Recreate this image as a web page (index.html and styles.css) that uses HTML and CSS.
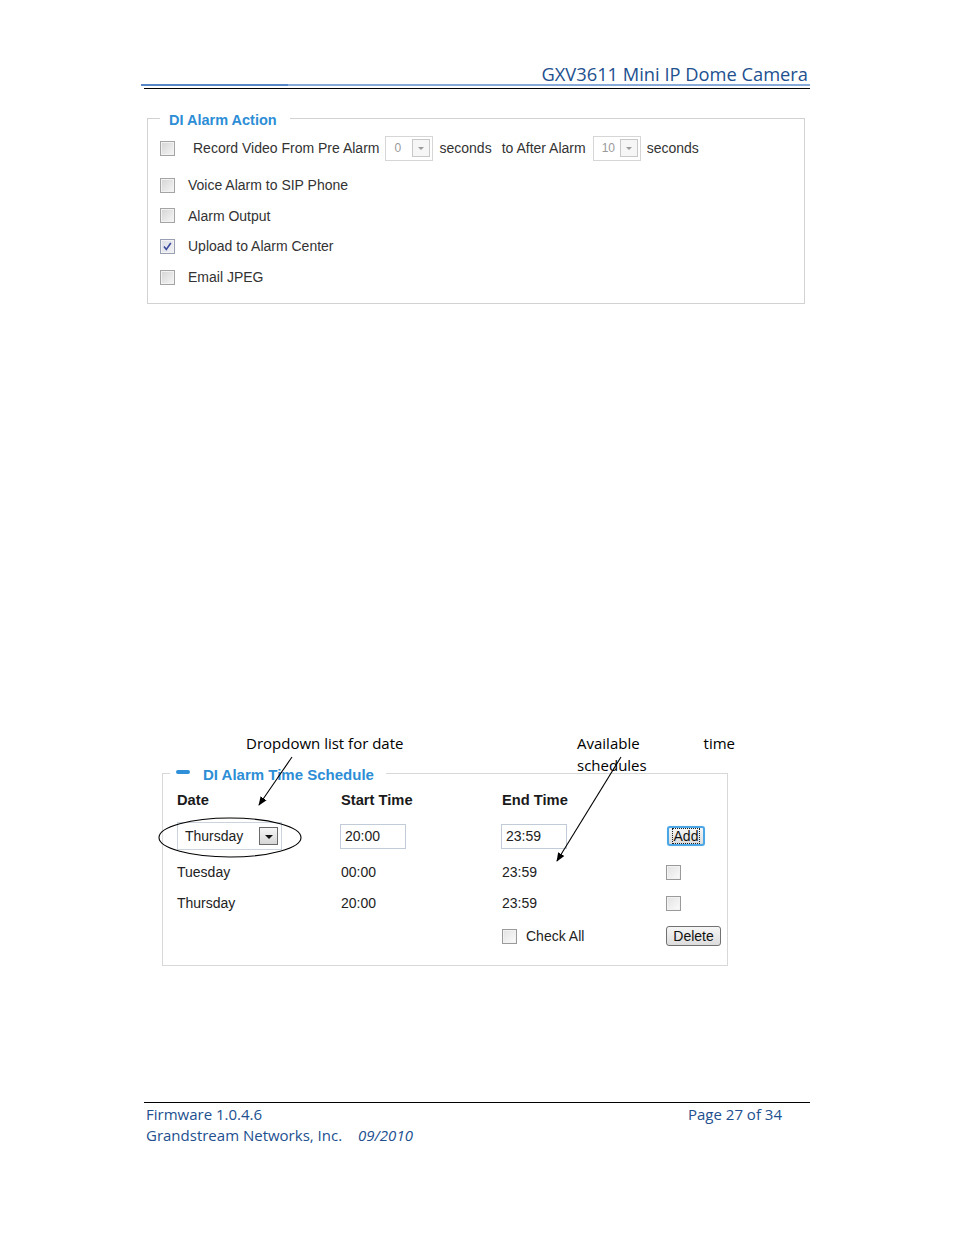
FILE: index.html
```html
<!DOCTYPE html>
<html lang="en">
<head>
<meta charset="utf-8">
<title>GXV3611 Mini IP Dome Camera - Page 27</title>
<link rel="stylesheet" href="styles.css">
</head>
<body>
<div class="page">
  <header class="doc-header">
    <div class="doc-title">GXV3611 Mini IP Dome Camera</div>
    <div class="rule-blue"></div>
    <div class="rule-black"></div>
  </header>

  <fieldset class="panel panel-action">
    <legend class="panel-legend">DI Alarm Action</legend>
    <div class="opt-row opt-row-first">
      <span class="cb"></span>
      <span class="opt-label indent-first">Record Video From Pre Alarm</span>
      <span class="mini-select sel-pre"><span class="mini-val">0</span><span class="mini-arrow"></span></span>
      <span class="opt-label gap-s">seconds</span>
      <span class="opt-label gap-m">to After Alarm</span>
      <span class="mini-select sel-post"><span class="mini-val">10</span><span class="mini-arrow"></span></span>
      <span class="opt-label gap-s">seconds</span>
    </div>
    <div class="opt-row">
      <span class="cb"></span>
      <span class="opt-label">Voice Alarm to SIP Phone</span>
    </div>
    <div class="opt-row">
      <span class="cb"></span>
      <span class="opt-label">Alarm Output</span>
    </div>
    <div class="opt-row">
      <span class="cb cb-checked"><svg viewBox="0 0 15 15" width="15" height="15"><path d="M4 7.5 L6.3 10.5 L10.8 4" fill="none" stroke="#3b4a9c" stroke-width="1.6"/></svg></span>
      <span class="opt-label">Upload to Alarm Center</span>
    </div>
    <div class="opt-row">
      <span class="cb"></span>
      <span class="opt-label">Email JPEG</span>
    </div>
  </fieldset>

  <section class="schedule-area">
    <div class="annotations">
      <div class="note note-left">Dropdown list for date</div>
      <div class="note note-right">Available time schedules</div>
    </div>

    <fieldset class="panel panel-schedule">
      <legend class="panel-legend legend-schedule"><span class="minus-icon"></span>DI Alarm Time Schedule</legend>
      <div class="sched-grid">
        <div class="col-head">Date</div>
        <div class="col-head">Start Time</div>
        <div class="col-head">End Time</div>
        <div></div>

        <div><span class="date-select"><span class="date-val">Thursday</span><span class="date-arrow"></span></span></div>
        <div><span class="time-input">20:00</span></div>
        <div><span class="time-input end-input">23:59</span></div>
        <div><span class="btn btn-add"><span class="focus-ring">Add</span></span></div>

        <div>Tuesday</div>
        <div>00:00</div>
        <div>23:59</div>
        <div><span class="cb cb-light"></span></div>

        <div>Thursday</div>
        <div>20:00</div>
        <div>23:59</div>
        <div><span class="cb cb-light"></span></div>

        <div></div>
        <div></div>
        <div class="check-all"><span class="cb cb-light"></span><span class="check-all-label">Check All</span></div>
        <div><span class="btn btn-delete">Delete</span></div>
      </div>
    </fieldset>

    <svg class="callouts" width="954" height="250" viewBox="0 0 954 250">
      <defs>
        <marker id="head" viewBox="0 0 10 10" refX="9" refY="5" markerWidth="9" markerHeight="9" orient="auto" markerUnits="userSpaceOnUse">
          <path d="M0 1 L10 5 L0 9 Z" fill="#000"/>
        </marker>
      </defs>
      <line x1="292" y1="25" x2="259" y2="73" stroke="#000" stroke-width="1.1" marker-end="url(#head)"/>
      <line x1="621" y1="25" x2="557" y2="129" stroke="#000" stroke-width="1.1" marker-end="url(#head)"/>
      <ellipse cx="230" cy="105.5" rx="71" ry="19.5" fill="none" stroke="#000" stroke-width="1.1"/>
    </svg>
  </section>

  <footer class="doc-footer">
    <div>Firmware 1.0.4.6</div>
    <div>Page 27 of 34</div>
    <div>Grandstream Networks, Inc.<span class="foot-date">09/2010</span></div>
    <div></div>
  </footer>
</div>
</body>
</html>
```

FILE: styles.css
```css
body {
  margin: 0;
  background: #ffffff;
}

.page {
  width: 954px;
  height: 1235px;
  display: flex;
  flex-direction: column;
  font-family: "Liberation Sans", Arial, sans-serif;
  background: #ffffff;
}

/* ---------- document header ---------- */
.doc-header {
  margin: 64px 0 0 141px;
  width: 669px;
}

.doc-title {
  font-family: "Open Sans", "Noto Sans", sans-serif;
  font-size: 18.3px;
  line-height: 20px;
  height: 20px;
  color: #22508f;
  text-align: right;
  padding-right: 2px;
}

.rule-blue {
  height: 2px;
  background: linear-gradient(to right, #5886c4 0, #5886c4 22%, #87aad9 22%, #87aad9 100%);
}

.rule-black {
  height: 1px;
  background: #000000;
  margin: 2px 0 0 3px;
}

/* ---------- panels ---------- */
.panel {
  margin: 0;
  min-width: 0;
  box-sizing: border-box;
  border: 1px solid #d2d2d2;
}

.panel-legend {
  font-weight: bold;
  font-size: 14.5px;
  line-height: 16px;
  color: #2d8ed6;
  padding: 4px 13px 0 9px;
}

.panel-action {
  margin: 19px 0 0 147px;
  width: 658px;
  padding: 5px 12px 11px 12px;
}

.opt-row {
  display: flex;
  align-items: center;
  height: 30.6px;
}

.opt-row-first {
  height: 30px;
  margin-bottom: 7px;
}

.cb {
  flex: none;
  display: inline-block;
  width: 15px;
  height: 15px;
  box-sizing: border-box;
  border: 1px solid #a4a4a4;
  background: linear-gradient(135deg, #d4d4d4 0%, #ececec 70%, #f6f6f6 100%);
  box-shadow: inset 0 0 0 1px #f2f2f2;
  vertical-align: middle;
}

.cb svg {
  display: block;
  margin: -1px;
}

.cb-checked {
  border-color: #9aa0b4;
  background: linear-gradient(135deg, #dcdde6 0%, #f1f1f5 100%);
}

.opt-label {
  font-size: 14px;
  color: #333333;
  margin-left: 13px;
  white-space: nowrap;
}

.indent-first {
  margin-left: 18px;
}

.gap-s {
  margin-left: 6px;
}

.gap-m {
  margin-left: 10px;
}

.mini-select {
  display: flex;
  align-items: center;
  width: 48px;
  height: 25px;
  box-sizing: border-box;
  border: 1px solid #d6d6d6;
  padding-left: 8px;
  margin-left: 6px;
}

.sel-post {
  margin-left: 7px;
}

.mini-val {
  font-size: 12px;
  color: #9a9a9a;
}

.mini-arrow {
  margin-left: auto;
  margin-right: 2px;
  width: 18px;
  height: 18px;
  box-sizing: border-box;
  border: 1px solid #c8c8c8;
  background: #f6f6f6;
  display: flex;
  align-items: center;
  justify-content: center;
}

.mini-arrow::after {
  content: "";
  border-left: 3px solid transparent;
  border-right: 3px solid transparent;
  border-top: 3px solid #9a9a9a;
}

/* ---------- schedule area ---------- */
.schedule-area {
  position: relative;
  margin-top: 428px;
}

.annotations {
  display: flex;
  font-family: "Open Sans", "Noto Sans", sans-serif;
  font-size: 15px;
  line-height: 22px;
  color: #000000;
}

.note-left {
  margin-left: 246px;
  width: 331px;
  white-space: nowrap;
}

.note-right {
  width: 158px;
  text-align: justify;
  text-align-last: left;
}

.panel-schedule {
  margin: -13px 0 0 162px;
  width: 566px;
  padding: 5px 0 15px 14px;
  border-color: #d8d8d8;
}

.legend-schedule {
  font-size: 15px;
  margin-left: -7px;
  padding: 4px 12px 0 6px;
  display: flex;
  align-items: center;
}

.minus-icon {
  display: inline-block;
  width: 14px;
  height: 4px;
  border-radius: 2px;
  background: #2f8fd8;
  margin-right: 13px;
  position: relative;
  top: -3px;
}

.sched-grid {
  display: grid;
  grid-template-columns: 164px 161px 164px 1fr;
  grid-template-rows: 24px 48px 24px 38px 28px;
  align-items: center;
  font-size: 14px;
  color: #222222;
}

.sched-grid > div {
  display: flex;
  align-items: center;
}

.col-head {
  font-weight: bold;
  font-size: 14.7px;
  color: #1a1a1a;
}

.date-select {
  display: flex;
  align-items: center;
  width: 105px;
  height: 28px;
  box-sizing: border-box;
  border: 1px solid #cbd3dd;
  padding-left: 7px;
}

.date-val {
  font-size: 14px;
  color: #222222;
}

.date-arrow {
  margin-left: auto;
  margin-right: 3px;
  width: 19px;
  height: 18px;
  box-sizing: border-box;
  border: 1px solid #6a6a6a;
  background: linear-gradient(#f6f6f6, #d6d6d6);
  display: flex;
  align-items: center;
  justify-content: center;
}

.date-arrow::after {
  content: "";
  border-left: 4px solid transparent;
  border-right: 4px solid transparent;
  border-top: 4px solid #111111;
  margin-top: 1px;
}

.time-input {
  display: flex;
  align-items: center;
  width: 66px;
  height: 25px;
  box-sizing: border-box;
  border: 1px solid #c2ccd9;
  padding-left: 4px;
  margin-left: -1px;
  color: #222222;
}

.end-input {
  margin-left: -1px;
}

.btn {
  display: flex;
  align-items: center;
  justify-content: center;
  height: 20px;
  box-sizing: border-box;
  border-radius: 3px;
  background: linear-gradient(#f6f6f6, #dcdcdc);
  font-size: 14px;
  color: #111111;
}

.btn-add {
  width: 38px;
  margin-left: 1px;
  border: 2px solid #4aa6e4;
  box-shadow: 0 0 1px #9fd0f2;
}

.focus-ring {
  outline: 1px dotted #222222;
  padding: 0 1px;
  line-height: 14px;
}

.btn-delete {
  width: 55px;
  border: 1px solid #717171;
}

.cb-light {
  border-color: #9a9a9a;
  background: linear-gradient(135deg, #e2e2e2 0%, #f6f6f6 80%, #ffffff 100%);
}

.check-all-label {
  margin-left: 9px;
  color: #222222;
}

.callouts {
  position: absolute;
  left: 0;
  top: 0;
  pointer-events: none;
}

/* ---------- footer ---------- */
.doc-footer {
  margin: 136px 0 0 144px;
  width: 666px;
  border-top: 1px solid #000000;
  padding-top: 1px;
  display: grid;
  grid-template-columns: 544px 1fr;
  font-family: "Open Sans", "Noto Sans", sans-serif;
  font-size: 15px;
  line-height: 21px;
  color: #22508f;
}

.doc-footer > div:nth-child(odd) {
  padding-left: 2px;
}

.foot-date {
  font-style: italic;
  margin-left: 16px;
}
```
